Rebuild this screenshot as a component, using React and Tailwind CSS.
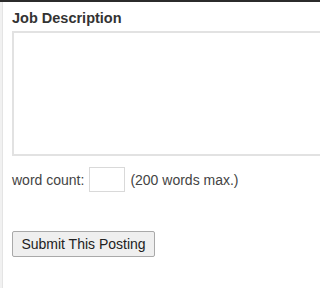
export default function App() {
  return (
    <div
      className="w-full min-w-[288px] h-[288px] overflow-hidden bg-white border-t-2 border-[#2b2b2b] flex"
      style={{ fontFamily: '"Liberation Sans", Arial, sans-serif' }}
    >
      <div className="w-[3px] shrink-0 bg-[#f1f1f1] border-r border-[#e4e4e4]" />
      <div className="flex-1 min-w-0 pl-[9px] pt-[7px]">
        <h2 className="text-[14.5px] leading-[18px] font-bold text-[#333]">Job Description</h2>
        <textarea className="mt-[4px] block w-[400px] h-[125px] border-2 border-[#e2e2e2] bg-white resize-none outline-none" />
        <div className="mt-[11px] flex items-center text-[14px] text-[#444]">
          <span className="pt-[2px]">word count:</span>
          <input className="ml-[5px] w-[36px] h-[25px] border border-[#d9d9d9] outline-none" />
          <span className="ml-[5px] pt-[2px]">(200 words max.)</span>
        </div>
        <button className="mt-[39px] w-[143px] h-[26px] bg-[#efefef] border border-[#a9a9a9] rounded-[2px] text-[14px] text-[#222] flex items-center justify-center">
          Submit This Posting
        </button>
      </div>
    </div>
  )
}
